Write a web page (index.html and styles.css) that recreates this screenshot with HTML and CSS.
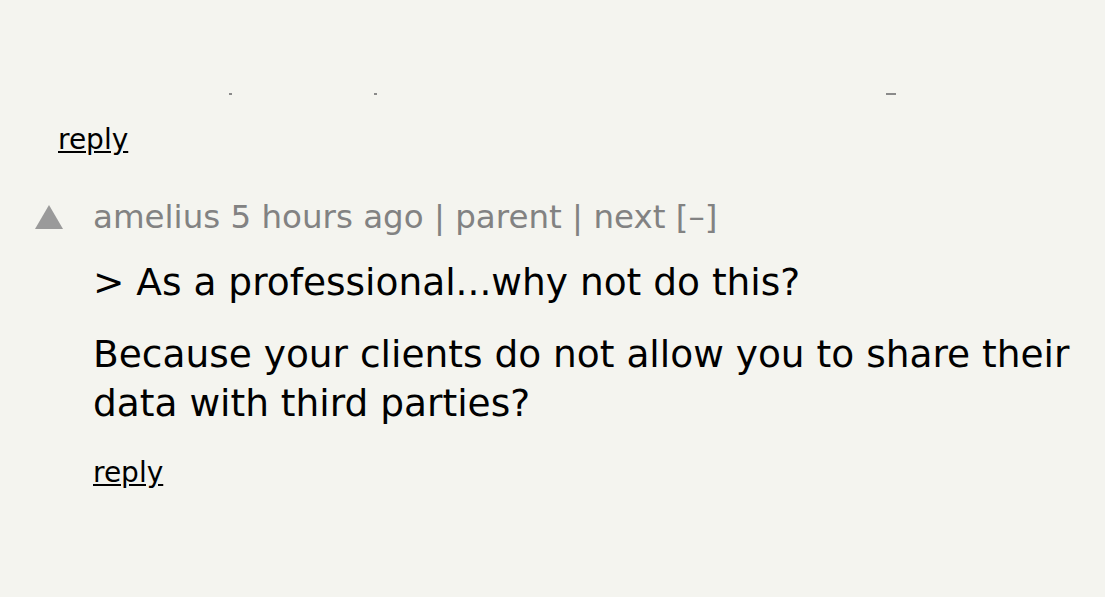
FILE: index.html
```html
<!DOCTYPE html>
<html>
<head>
<meta charset="utf-8">
<link rel="stylesheet" href="styles.css">
</head>
<body>
<div class="page">
  <div class="clipped">
    <span class="mark m1"></span><span class="mark m2"></span><span class="mark m3"></span>
  </div>
  <div class="prev reply-row">
    <a class="reply" href="#">reply</a>
  </div>
  <div class="comment">
    <div class="vote"><svg width="28" height="24" viewBox="0 0 28 24"><polygon points="14,0 28,24 0,24" fill="#9a9a9a"/></svg></div>
    <div class="body">
      <div class="meta">amelius 5 hours ago | parent | next [–]</div>
      <div class="text">
        <p>&gt; As a professional...why not do this?</p>
        <p>Because your clients do not allow you to share their data with third parties?</p>
      </div>
      <div class="reply-row"><a class="reply" href="#">reply</a></div>
    </div>
  </div>
</div>
</body>
</html>
```
FILE: styles.css
```css
html, body {
  margin: 0;
  padding: 0;
  background: #f4f4ef;
}
.page {
  position: relative;
  width: 1105px;
  height: 597px;
  overflow: hidden;
  font-family: "DejaVu Sans", sans-serif;
  color: #000;
}
.clipped {
  position: relative;
  height: 96px;
}
.mark {
  position: absolute;
  top: 93px;
  height: 2px;
  background: #8a8a8a;
}
.m1 { left: 229px; width: 3px; }
.m2 { left: 374px; width: 3px; }
.m3 { left: 886px; width: 10px; }
.reply-row {
  font-size: 28px;
  line-height: 32px;
}
.prev {
  padding-left: 58px;
  padding-top: 28px;
}
.reply {
  color: #000;
  text-decoration: underline;
}
.comment {
  display: flex;
  padding-left: 35px;
  padding-top: 41px;
}
.vote {
  width: 58px;
  padding-top: 8px;
}
.body {
  flex: 1;
}
.meta {
  color: #828282;
  font-size: 32.5px;
  line-height: 40px;
}
.text {
  font-size: 37.5px;
  line-height: 49px;
  margin-top: 21px;
}
.text p {
  margin: 0 0 23px 0;
  width: 1000px;
}
.text p:last-child {
  margin-bottom: 0;
}
.body .reply-row {
  margin-top: 29px;
}
```
